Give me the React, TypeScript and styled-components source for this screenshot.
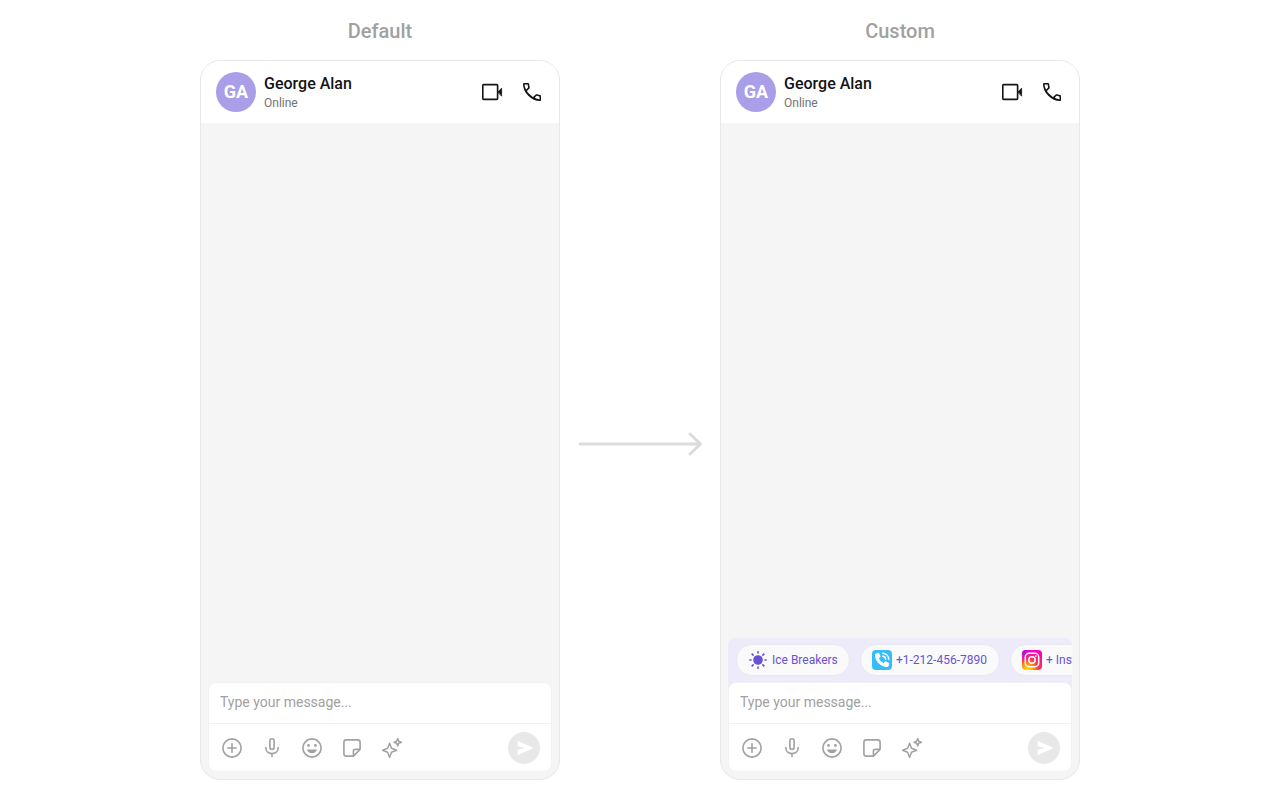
import React from "react";
import styled, { createGlobalStyle } from "styled-components";

const GlobalStyle = createGlobalStyle`
  *, *::before, *::after { box-sizing: border-box; }
  body {
    margin: 0;
    background: #ffffff;
    color: #141414;
    font-family: Roboto, "Liberation Sans", sans-serif;
  }
  button, input { font: inherit; color: inherit; }
`;

const Page = styled.main`
  min-height: 100vh;
  display: flex;
  justify-content: center;
  padding: 16px 20px 20px;
`;

const Column = styled.section`
  flex: 0 1 360px;
  min-width: 0;
  display: flex;
  flex-direction: column;
  gap: 14px;
`;

const Title = styled.h2`
  margin: 0;
  font-size: 20px;
  line-height: 30px;
  font-weight: 500;
  text-align: center;
  color: #a1a1a1;
`;

const Between = styled.div`
  flex: 0 1 160px;
  display: flex;
  align-items: center;
  justify-content: center;
  padding-top: 92px;
`;

const Phone = styled.article`
  flex: 1;
  display: flex;
  flex-direction: column;
  overflow: hidden;
  border: 1px solid #e8e8e8;
  border-radius: 20px;
  background: #f5f5f5;
`;

const Header = styled.header`
  display: flex;
  align-items: center;
  gap: 8px;
  padding: 11px 15px;
  background: #ffffff;
`;

const Avatar = styled.div`
  width: 40px;
  height: 40px;
  border-radius: 50%;
  background: #aa9ee8;
  color: #ffffff;
  font-size: 18px;
  line-height: 40px;
  font-weight: 700;
  text-align: center;
`;

const Person = styled.div`
  flex: 1;
  min-width: 0;
  padding-top: 2px;
`;

const Name = styled.h3`
  margin: 0;
  font-size: 16px;
  line-height: 20px;
  font-weight: 500;
`;

const Status = styled.p`
  margin: 0;
  font-size: 12px;
  line-height: 18px;
  color: #727272;
`;

const Actions = styled.div`
  display: flex;
  gap: 16px;
`;

const IconButton = styled.button`
  display: flex;
  width: 24px;
  height: 24px;
  padding: 0;
  border: 0;
  background: none;
  cursor: pointer;
`;

const Messages = styled.div`
  flex: 1;
`;

const Footer = styled.footer`
  padding: 0 7px 7px;
`;

const ChipBar = styled.div`
  display: flex;
  gap: 10px;
  overflow: hidden;
  margin-bottom: -8px;
  padding: 6px 0 14px 8px;
  border-radius: 8px 8px 0 0;
  background: #edeafa;
`;

const Chip = styled.button<{ $minWidth: number }>`
  flex: none;
  display: flex;
  align-items: center;
  gap: 4px;
  min-width: ${(p) => p.$minWidth}px;
  height: 32px;
  padding: 0 11px;
  border: 1px solid #e8e8f0;
  border-radius: 16px;
  background: #fafafa;
  color: #6852d6;
  font-size: 12px;
  line-height: 16px;
  white-space: nowrap;
  cursor: pointer;
`;

const Composer = styled.form`
  position: relative;
  border: 1px solid #f2f2f4;
  border-radius: 8px;
  background: #ffffff;
`;

const MessageInput = styled.input`
  display: block;
  width: 100%;
  height: 40px;
  padding: 0 11px 2px;
  border: 0;
  outline: 0;
  border-radius: 8px;
  background: none;
  font-size: 14px;
  color: #141414;
  &::placeholder { color: #a1a1a1; opacity: 1; }
`;

const Toolbar = styled.div`
  display: flex;
  align-items: center;
  justify-content: space-between;
  height: 48px;
  padding: 0 11px;
  border-top: 1px solid #f2f2f2;
  color: #a1a1a1;
`;

const SendButton = styled.button`
  display: flex;
  width: 32px;
  height: 32px;
  padding: 0;
  border: 0;
  border-radius: 50%;
  background: #e8e8e8;
  color: #ffffff;
  cursor: pointer;
`;

type IconProps = { children: React.ReactNode; size?: number; width?: number };

const Icon = ({ children, size = 24, width = 1.5 }: IconProps) => (
  <svg
    width={size}
    height={size}
    viewBox={`0 0 ${size} ${size}`}
    fill="none"
    stroke="currentColor"
    strokeWidth={width}
    strokeLinejoin="round"
    strokeLinecap="round"
    aria-hidden="true"
  >
    {children}
  </svg>
);

const VideoIcon = () => (
  <Icon width={1.6}>
    <rect x="2.8" y="4.6" width="14.8" height="14.8" rx="0.8" />
    <path d="M18 12 21.6 8.2V15.8Z" fill="currentColor" strokeWidth="0.8" />
  </Icon>
);

const PhoneIcon = () => (
  <Icon>
    <path
      fill="currentColor"
      fillRule="evenodd"
      stroke="none"
      d="M19.95 21q-3.125 0-6.175-1.362t-5.55-3.863t-3.862-5.55T3 4.05q0-.45.3-.75t.75-.3H8.1q.35 0 .625.238t.325.562l.65 3.5q.05.4-.025.675T9.4 8.45L6.975 10.9q.5.925 1.187 1.787t1.513 1.663q.775.775 1.625 1.438T13.1 17l2.35-2.35q.225-.225.588-.337t.712-.063l3.45.7q.35.1.575.363T21 15.9v4.05q0 .45-.3.75t-.75.3ZM6.2 9.4 8.1 7.5 7.6 4.5H4.6q.05 1.2.4 2.425T6.2 9.4ZM14.7 17.85q1.1.5 2.275.8T19.5 19.4V16.4l-2.9-.55Z"
    />
  </Icon>
);

const PlusIcon = () => (
  <Icon width={1.6}>
    <circle cx="12" cy="12" r="9.1" />
    <path d="M12 7.8V16.2M7.8 12H16.2" />
  </Icon>
);

const MicIcon = () => (
  <Icon width={1.6}>
    <rect x="9.9" y="2.8" width="4.2" height="10.6" rx="2.1" />
    <path d="M5.8 11.6C5.8 15.2 8.4 17.6 12 17.6S18.2 15.2 18.2 11.6M12 17.8V20.6" />
  </Icon>
);

const SmileIcon = () => (
  <Icon width={1.6}>
    <circle cx="12" cy="12" r="9.1" />
    <circle cx="8.6" cy="9.4" r="1.4" fill="currentColor" stroke="none" />
    <circle cx="15.4" cy="9.4" r="1.4" fill="currentColor" stroke="none" />
    <path d="M6.9 13.6H17.1C16.4 15.9 14.4 17.3 12 17.3S7.6 15.9 6.9 13.6Z" fill="currentColor" stroke="none" />
  </Icon>
);

const StickerIcon = () => (
  <Icon width={1.6}>
    <path d="M13.4 20.1H6.2Q3.9 20.1 3.9 17.8V6.2Q3.9 3.9 6.2 3.9H17.8Q20.1 3.9 20.1 6.2V13.4L13.4 20.1V15.3Q13.4 13.4 15.3 13.4H20.1" />
  </Icon>
);

const SparkleIcon = () => (
  <Icon width={1.5}>
    <path d="M9.6 7.2 11.5 12.3 16.6 14.3 11.5 16.3 9.6 21.3 7.6 16.3 2.6 14.3 7.6 12.3Z" />
    <path d="M17.7 2.6 18.7 5.3 21.4 6.3 18.7 7.3 17.7 10 16.7 7.3 14 6.3 16.7 5.3Z" />
  </Icon>
);

const SendIcon = () => (
  <Icon size={32}>
    <path d="M9.6 8.8 25.6 16 9.6 23.2V17.8L17 16 9.6 14.2Z" fill="currentColor" stroke="none" />
  </Icon>
);

const SunIcon = () => (
  <Icon size={20} width={1.7}>
    <circle cx="10" cy="10" r="4.8" fill="currentColor" stroke="none" />
    <path
      strokeLinecap="butt"
      d="M10 1.3V3.6M10 16.4V18.7M1.3 10H3.6M16.4 10H18.7M3.7 3.7 5.6 5.6M14.4 14.4 16.3 16.3M3.7 16.3 5.6 14.4M14.4 5.6 16.3 3.7"
    />
  </Icon>
);

const CallAppIcon = () => (
  <Icon size={20} width={1.4}>
    <rect width="20" height="20" rx="4" fill="#35bdfb" stroke="none" />
    <path
      fill="#ffffff"
      stroke="none"
      d="M4.1 3.4 6.1 2.8Q7 2.7 7.3 3.5L8.4 6Q8.7 6.8 8.1 7.3L6.8 8.4Q8.3 11.6 11.5 13.2L12.7 11.8Q13.2 11.2 14 11.6L16.6 12.7Q17.4 13.1 17.2 13.9L16.6 15.9Q16.3 17 15.1 17C8.6 17 3 11.4 3 4.8Q3 3.7 4.1 3.4Z"
    />
    <path stroke="#ffffff" d="M10.6 3.3C14 3.4 16.6 6 16.7 9.4M10.6 6.3C12.4 6.4 13.6 7.6 13.7 9.4" />
  </Icon>
);

const InstagramIcon = () => (
  <Icon size={20} width={1.5}>
    <defs>
      <radialGradient id="insta-warm" cx="0.28" cy="1" r="0.95">
        <stop offset="0" stopColor="#ffdd00" />
        <stop offset="0.25" stopColor="#ffb000" />
        <stop offset="0.55" stopColor="#ff3f3d" />
        <stop offset="1" stopColor="#ff00b8" />
      </radialGradient>
      <radialGradient id="insta-cool" cx="0" cy="0" r="0.65">
        <stop offset="0" stopColor="#7a18ff" />
        <stop offset="1" stopColor="#ff00d0" stopOpacity="0" />
      </radialGradient>
    </defs>
    <rect width="20" height="20" rx="4" fill="url(#insta-warm)" stroke="none" />
    <rect width="20" height="20" rx="4" fill="url(#insta-cool)" stroke="none" />
    <g stroke="#ffffff">
      <rect x="3.3" y="3.3" width="13.4" height="13.4" rx="3.8" />
      <circle cx="10" cy="10" r="3.2" />
    </g>
    <circle cx="13.9" cy="6.1" r="0.9" fill="#ffffff" stroke="none" />
  </Icon>
);

const ArrowIcon = () => (
  <svg width="126" height="26" viewBox="0 0 126 26" fill="none" stroke="#dcdcdc" strokeWidth="3" strokeLinecap="round" strokeLinejoin="round" aria-hidden="true">
    <path d="M3 13H123M113 3 123.5 13 113 23" />
  </svg>
);

const tools = [
  { label: "Add attachment", Glyph: PlusIcon },
  { label: "Record voice", Glyph: MicIcon },
  { label: "Emoji", Glyph: SmileIcon },
  { label: "Stickers", Glyph: StickerIcon },
  { label: "AI assistant", Glyph: SparkleIcon },
];

const chips = [
  { label: "Ice Breakers", Glyph: SunIcon, minWidth: 114 },
  { label: "+1-212-456-7890", Glyph: CallAppIcon, minWidth: 140 },
  { label: "+ Instagram", Glyph: InstagramIcon, minWidth: 114 },
];

function Chat({ title, withChips = false }: { title: string; withChips?: boolean }) {
  return (
    <Column>
      <Title>{title}</Title>
      <Phone>
        <Header>
          <Avatar>GA</Avatar>
          <Person>
            <Name>George Alan</Name>
            <Status>Online</Status>
          </Person>
          <Actions>
            <IconButton type="button" aria-label="Video call"><VideoIcon /></IconButton>
            <IconButton type="button" aria-label="Voice call"><PhoneIcon /></IconButton>
          </Actions>
        </Header>
        <Messages />
        <Footer>
          {withChips && (
            <ChipBar>
              {chips.map(({ label, Glyph, minWidth }) => (
                <Chip key={label} type="button" $minWidth={minWidth}><Glyph />{label}</Chip>
              ))}
            </ChipBar>
          )}
          <Composer onSubmit={(e) => e.preventDefault()}>
            <MessageInput type="text" aria-label="Message" placeholder="Type your message..." />
            <Toolbar>
              <Actions>
                {tools.map(({ label, Glyph }) => (
                  <IconButton key={label} type="button" aria-label={label}><Glyph /></IconButton>
                ))}
              </Actions>
              <SendButton type="submit" aria-label="Send"><SendIcon /></SendButton>
            </Toolbar>
          </Composer>
        </Footer>
      </Phone>
    </Column>
  );
}

export default function App() {
  return (
    <>
      <GlobalStyle />
      <Page>
        <Chat title="Default" />
        <Between><ArrowIcon /></Between>
        <Chat title="Custom" withChips />
      </Page>
    </>
  );
}
